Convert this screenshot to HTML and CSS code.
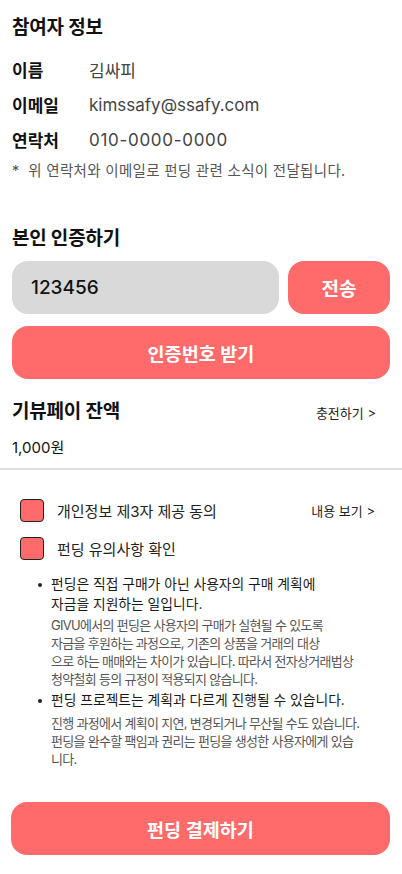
FILE: index.html
```html
<!DOCTYPE html>
<html lang="ko">
<head>
<meta charset="utf-8">
<link rel="stylesheet" href="styles.css">
</head>
<body>
<main class="page">
  <section class="participant">
    <h2 class="title">참여자 정보</h2>
    <div class="info-row"><span class="label">이름</span><span class="value">김싸피</span></div>
    <div class="info-row"><span class="label">이메일</span><span class="value">kimssafy@ssafy.com</span></div>
    <div class="info-row"><span class="label">연락처</span><span class="value phone">010-0000-0000</span></div>
    <p class="note">*&nbsp; 위 연락처와 이메일로 펀딩 관련 소식이 전달됩니다.</p>
  </section>

  <section class="verify">
    <h2 class="title">본인 인증하기</h2>
    <div class="code-row">
      <div class="code-input">123456</div>
      <button class="btn btn-send">전송</button>
    </div>
    <button class="btn btn-full">인증번호 받기</button>
  </section>

  <section class="pay">
    <div class="pay-head">
      <h2 class="title">기뷰페이 잔액</h2>
      <span class="link">충전하기 <span class="chev">&gt;</span></span>
    </div>
    <div class="balance">1,000원</div>
  </section>

  <hr class="divider">

  <section class="agree">
    <div class="check-row">
      <span class="box"></span>
      <span class="check-label">개인정보 제3자 제공 동의</span>
      <span class="link">내용 보기 <span class="chev">&gt;</span></span>
    </div>
    <div class="check-row">
      <span class="box"></span>
      <span class="check-label">펀딩 유의사항 확인</span>
    </div>
    <ul class="notes">
      <li>
        <p class="bullet-title">펀딩은 직접 구매가 아닌 사용자의 구매 계획에<br>자금을 지원하는 일입니다.</p>
        <p class="bullet-text">GIVU에서의 펀딩은 사용자의 구매가 실현될 수 있도록<br>자금을 후원하는 과정으로, 기존의 상품을 거래의 대상<br>으로 하는 매매와는 차이가 있습니다. 따라서 전자상거래법상<br>청약철회 등의 규정이 적용되지 않습니다.</p>
      </li>
      <li>
        <p class="bullet-title">펀딩 프로젝트는 계획과 다르게 진행될 수 있습니다.</p>
        <p class="bullet-text">진행 과정에서 계획이 지연, 변경되거나 무산될 수도 있습니다.<br>펀딩을 완수할 팩임과 권리는 펀딩을 생성한 사용자에게 있습<br>니다.</p>
      </li>
    </ul>
  </section>

  <button class="btn btn-pay">펀딩 결제하기</button>
</main>
</body>
</html>
```

FILE: styles.css
```css
* { box-sizing: border-box; }
html, body { margin: 0; padding: 0; background: #fff; }
body {
  font-family: Inter, "Noto Sans CJK KR", sans-serif;
  color: #111;
  width: 402px;
}
.page { display: flex; flex-direction: column; padding: 0 12px; }
h2, p { margin: 0; }
.title { font-size: 19px; font-weight: 700; color: #111; line-height: 24px; letter-spacing: -0.2px; }

.participant { padding-top: 16px; }
.participant .title { margin-bottom: 12px; }
.info-row { display: flex; align-items: center; height: 35px; font-size: 17px; }
.label { width: 77px; font-weight: 700; color: #111; }
.value { color: #444; font-weight: 400; }
.phone { letter-spacing: 0.7px; }
.note { font-size: 14.5px; color: #555; margin-top: 4px; line-height: 20px; letter-spacing: 0.3px; }

.verify { padding-top: 46px; }
.verify .title { margin-bottom: 10px; }
.code-row { display: flex; gap: 9px; }
.code-input {
  flex: 1; height: 53px; background: #d9d9d9; border-radius: 16px;
  display: flex; align-items: center; padding-left: 19px;
  font-size: 19px; font-weight: 500; color: #111;
}
.btn {
  border: none; background: #ff6b6b; color: #fff; font-family: inherit;
  font-weight: 600; border-radius: 16px; height: 53px; padding: 0;
}
.btn-send { width: 102px; font-size: 19px; }
.btn-full { width: 100%; margin-top: 12px; font-size: 18.5px; }

.pay { padding-top: 21px; }
.pay-head { display: flex; justify-content: space-between; align-items: center; }
.link { font-size: 13px; color: #222; margin-right: 14px; }
.chev { font-size: 13px; }
.balance { font-size: 15px; margin-top: 12px; color: #111; }

.divider { border: none; border-top: 2px solid #dedede; margin: 11px -12px 0; }

.agree { padding: 29px 0 0 8px; }
.check-row { display: flex; align-items: center; height: 23px; margin-bottom: 15px; font-size: 15px; }
.box {
  width: 24px; height: 23px; border-radius: 4px; background: #ff6b6b;
  border: 1px solid #222; flex: none;
}
.check-label { margin-left: 13px; flex: 1; color: #222; }
.check-row .link { margin-right: 15px; }

.notes { list-style: none; margin: -1px -12px 0 0; padding: 0 0 0 18px; }
.notes li { position: relative; padding-left: 13px; margin-bottom: 2px; }
.notes li + li .bullet-title { margin-bottom: 4px; }
.notes li::before {
  content: ""; position: absolute; left: 0; top: 9px; width: 4px; height: 4px;
  border-radius: 50%; background: #222;
}
.bullet-title { font-size: 13.8px; line-height: 20px; color: #1a1a1a; font-weight: 400; margin-bottom: 2px; white-space: nowrap; }
.bullet-text { font-size: 13px; line-height: 18px; color: #555; white-space: nowrap; letter-spacing: -0.7px; }

.btn-pay { margin-top: 32px; width: 379px; margin-left: -1px; font-size: 18.5px; }
```
